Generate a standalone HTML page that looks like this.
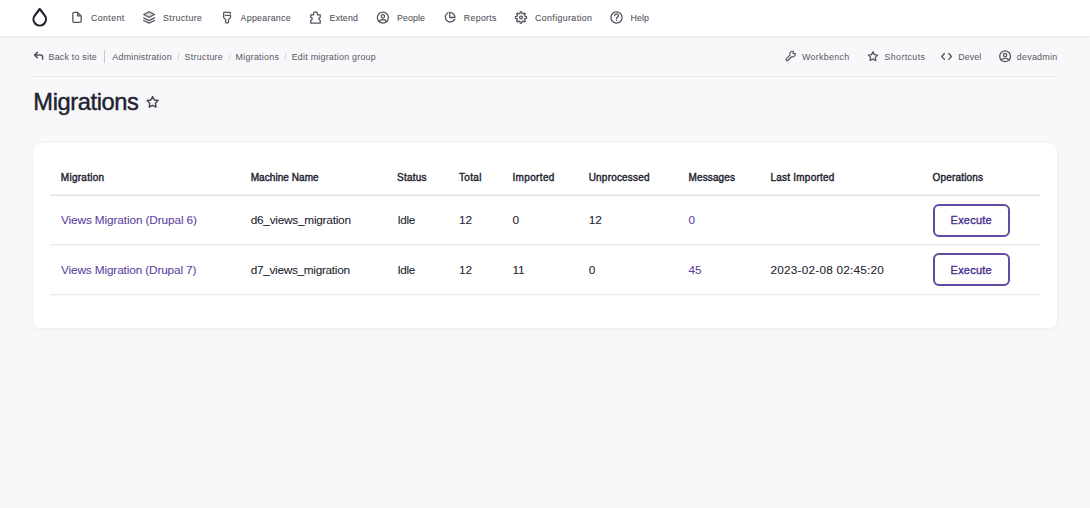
<!DOCTYPE html>
<html><head><meta charset="utf-8"><title>Migrations</title>
<style>
html,body{margin:0;padding:0}
body{width:1090px;height:508px;overflow:hidden;background:#f8f8fb;position:relative;font-family:"Liberation Sans",sans-serif}
.t{position:absolute;white-space:nowrap;line-height:1}
.ic{position:absolute;overflow:visible}
.ov{position:absolute;left:0;top:0}
.toolbar{position:absolute;left:0;top:0;width:1090px;height:36px;background:#fff;box-shadow:0 1px 3px rgba(0,0,0,0.07)}
.hr{position:absolute;left:33px;top:76px;width:1024px;height:1px;background:#e8e8eb}
.card{position:absolute;left:33px;top:143px;width:1024px;height:185px;background:#fff;border-radius:8px;box-shadow:0 1px 4px rgba(0,0,0,0.06)}
.line{position:absolute;left:50px;width:990px;height:1px;background:#ebebec}
.btn{position:absolute;left:932.5px;width:73px;height:29px;border:2px solid #634aa3;border-radius:6px;background:#fff}
</style></head><body>
<div class="toolbar"></div>
<div class="hr"></div>
<div class="card"></div>
<div class="line" style="top:194px;height:1px;background:#efefef"></div><div class="line" style="top:195px;height:1px;background:#e4e4e5"></div>
<div class="line" style="top:244px"></div><div class="line" style="top:245px;background:#f8f8f8"></div>
<div class="line" style="top:294px"></div><div class="line" style="top:295px;background:#f8f8f8"></div>
<div class="btn" style="top:203.5px"></div>
<div class="btn" style="top:253.3px"></div>
<div class="sep" style="position:absolute;left:104px;top:50px;width:1px;height:13px;background:#c8c8cf"></div>
<svg class="ov" width="1090" height="508" viewBox="0 0 1090 508"><path d="M39.75 9.0 L44.64 15.36 A6.25 6.25 0 1 1 34.86 15.36 Z" fill="none" stroke="#222330" stroke-width="2.2" stroke-linejoin="round"/><path d="M77.6 12.35 H74.0 Q72.85 12.35 72.85 13.5 V21.2 Q72.85 22.35 74.0 22.35 H80.0 Q81.15 22.35 81.15 21.2 V15.9 Z M77.6 12.35 V15.9 H81.15" fill="none" stroke="#545560" stroke-width="1.3" stroke-linecap="round" stroke-linejoin="round"/><path d="M143.7 14.5 L149.1 11.75 L154.5 14.5 L149.1 17.25 Z" fill="#d8d8dc" stroke="#545560" stroke-width="1.3" stroke-linejoin="round"/><path d="M143.7 17.85 L149.1 20.6 L154.5 17.85 M143.7 20.5 L149.1 23.1 L154.5 20.5" fill="none" stroke="#545560" stroke-width="1.3" stroke-linecap="round" stroke-linejoin="round"/><path d="M230.45 13.7 V13.0 Q230.45 12.35 229.8 12.35 H224.3 Q223.65 12.35 223.65 13.0 V17.6 L225.6 19.6 V22.2 Q225.6 22.8 226.2 22.8 H227.9 Q228.5 22.8 228.5 22.2 V19.6 L230.45 17.6 V15.3 H225.4" fill="none" stroke="#545560" stroke-width="1.3" stroke-linecap="round" stroke-linejoin="round"/><path d="M313.5 14.9 V13.9 A2.0 2.0 0 0 1 317.5 13.9 V14.9 H320.25 V17.4 A1.45 1.45 0 0 0 320.25 20.3 V23.05 H310.75 V20.3 A1.45 1.45 0 0 0 310.75 17.4 V14.9 Z" fill="none" stroke="#545560" stroke-width="1.3" stroke-linecap="round" stroke-linejoin="round"/><circle cx="382.9" cy="17.6" r="5.55" fill="none" stroke="#545560" stroke-width="1.3" stroke-linecap="round" stroke-linejoin="round"/><circle cx="382.9" cy="16.35" r="1.7" fill="none" stroke="#545560" stroke-width="1.2"/><path d="M379.0 21.7 Q379.9 19.7 382.9 19.7 Q385.9 19.7 386.8 21.7" fill="none" stroke="#545560" stroke-width="1.3" stroke-linecap="round" stroke-linejoin="round"/><path d="M447.9 12.7 A4.95 4.95 0 1 0 454.6 19.4" fill="none" stroke="#545560" stroke-width="1.3" stroke-linecap="round" stroke-linejoin="round"/><path d="M449.7 12.3 V17.5 H454.9 A5.2 5.2 0 0 0 449.7 12.3 Z" fill="none" stroke="#545560" stroke-width="1.3" stroke-linecap="round" stroke-linejoin="round"/><path d="M519.94,13.54 L520.22,11.95 L521.78,11.95 L522.06,13.54 L523.05,13.95 L524.37,13.03 L525.47,14.13 L524.55,15.45 L524.96,16.44 L526.55,16.72 L526.55,18.28 L524.96,18.56 L524.55,19.55 L525.47,20.87 L524.37,21.97 L523.05,21.05 L522.06,21.46 L521.78,23.05 L520.22,23.05 L519.94,21.46 L518.95,21.05 L517.63,21.97 L516.53,20.87 L517.45,19.55 L517.04,18.56 L515.45,18.28 L515.45,16.72 L517.04,16.44 L517.45,15.45 L516.53,14.13 L517.63,13.03 L518.95,13.95 Z" fill="none" stroke="#545560" stroke-width="1.25" stroke-linejoin="round"/><circle cx="521.0" cy="17.5" r="1.45" fill="none" stroke="#545560" stroke-width="1.3" stroke-linecap="round" stroke-linejoin="round"/><circle cx="616.5" cy="17.5" r="5.55" fill="none" stroke="#545560" stroke-width="1.3" stroke-linecap="round" stroke-linejoin="round"/><path d="M614.7 15.7 A1.85 1.85 0 1 1 617.3 17.4 Q616.5 17.8 616.5 18.5" fill="none" stroke="#545560" stroke-width="1.3" stroke-linecap="round" stroke-linejoin="round"/><circle cx="616.5" cy="20.4" r="0.75" fill="#545560"/><path d="M37.4 52.4 L34.6 55.1 L37.4 57.8 M34.8 55.1 H40.6 Q42.6 55.1 42.6 57.1 V59.3" fill="none" stroke="#545560" stroke-width="1.5" stroke-linecap="round" stroke-linejoin="round"/><path d="M786.45 58.55 L789.97 55.06 A2.8 2.8 0 0 1 793.32 51.40 L792.91 52.94 L793.76 53.79 L795.30 53.38 A2.8 2.8 0 0 1 791.64 56.73 L788.15 60.25 A1.2 1.2 0 0 1 786.45 58.55 Z" fill="none" stroke="#545560" stroke-width="1.15" stroke-linejoin="round"/><path d="M872.95,51.74 L874.39,54.62 L877.57,55.10 L875.28,57.36 L875.81,60.53 L872.95,59.05 L870.09,60.53 L870.62,57.36 L868.33,55.10 L871.51,54.62 Z" fill="none" stroke="#545560" stroke-width="1.3" stroke-linecap="round" stroke-linejoin="round"/><path d="M944.4 53.5 L941.75 56.45 L944.4 59.4 M948.8 53.5 L951.45 56.45 L948.8 59.4" fill="none" stroke="#545560" stroke-width="1.35" stroke-linecap="round" stroke-linejoin="round"/><circle cx="1005.1" cy="56.3" r="5.4" fill="none" stroke="#545560" stroke-width="1.3" stroke-linecap="round" stroke-linejoin="round"/><circle cx="1005.1" cy="55.0" r="1.6" fill="none" stroke="#545560" stroke-width="1.3" stroke-linecap="round" stroke-linejoin="round"/><path d="M1001.3 60.2 Q1002.2 58.4 1005.1 58.4 Q1008.0 58.4 1008.9 60.2" fill="none" stroke="#545560" stroke-width="1.3" stroke-linecap="round" stroke-linejoin="round"/><path d="M152.60,96.60 L154.33,99.96 L158.07,100.57 L155.41,103.26 L155.98,107.00 L152.60,105.30 L149.22,107.00 L149.79,103.26 L147.13,100.57 L150.87,99.96 Z" fill="none" stroke="#44454e" stroke-width="1.45" stroke-linejoin="round"/></svg>
<div class="t" style="left:91.10px;top:14.15px;font-size:8.8px;font-weight:400;color:#545560;letter-spacing:0.380px;-webkit-text-stroke:0.1px #545560">Content</div>
<div class="t" style="left:163.10px;top:14.15px;font-size:8.8px;font-weight:400;color:#545560;letter-spacing:0.387px;-webkit-text-stroke:0.1px #545560">Structure</div>
<div class="t" style="left:240.60px;top:14.15px;font-size:8.8px;font-weight:400;color:#545560;letter-spacing:0.282px;-webkit-text-stroke:0.1px #545560">Appearance</div>
<div class="t" style="left:329.60px;top:14.15px;font-size:8.8px;font-weight:400;color:#545560;letter-spacing:0.181px;-webkit-text-stroke:0.1px #545560">Extend</div>
<div class="t" style="left:397.00px;top:14.15px;font-size:8.8px;font-weight:400;color:#545560;letter-spacing:0.099px;-webkit-text-stroke:0.1px #545560">People</div>
<div class="t" style="left:463.80px;top:14.15px;font-size:8.8px;font-weight:400;color:#545560;letter-spacing:0.315px;-webkit-text-stroke:0.1px #545560">Reports</div>
<div class="t" style="left:535.00px;top:14.15px;font-size:8.8px;font-weight:400;color:#545560;letter-spacing:0.388px;-webkit-text-stroke:0.1px #545560">Configuration</div>
<div class="t" style="left:630.50px;top:14.15px;font-size:8.8px;font-weight:400;color:#545560;letter-spacing:0.133px;-webkit-text-stroke:0.1px #545560">Help</div>
<div class="t" style="left:48.50px;top:53.07px;font-size:8.9px;font-weight:400;color:#565761;letter-spacing:0.218px;">Back to site</div>
<div class="t" style="left:112.30px;top:53.07px;font-size:8.9px;font-weight:400;color:#565761;letter-spacing:0.239px;">Administration</div>
<div class="t" style="left:184.50px;top:53.07px;font-size:8.9px;font-weight:400;color:#565761;letter-spacing:0.287px;">Structure</div>
<div class="t" style="left:235.60px;top:53.07px;font-size:8.9px;font-weight:400;color:#565761;letter-spacing:0.260px;">Migrations</div>
<div class="t" style="left:291.70px;top:53.07px;font-size:8.9px;font-weight:400;color:#565761;letter-spacing:0.240px;">Edit migration group</div>
<div class="t" style="left:802.00px;top:53.07px;font-size:8.9px;font-weight:400;color:#565761;letter-spacing:0.293px;">Workbench</div>
<div class="t" style="left:884.50px;top:53.07px;font-size:8.9px;font-weight:400;color:#565761;letter-spacing:0.363px;">Shortcuts</div>
<div class="t" style="left:958.20px;top:53.07px;font-size:8.9px;font-weight:400;color:#565761;letter-spacing:0.111px;">Devel</div>
<div class="t" style="left:1016.80px;top:53.07px;font-size:8.9px;font-weight:400;color:#565761;letter-spacing:0.259px;">devadmin</div>
<div class="t" style="left:177.20px;top:53.07px;font-size:8.9px;font-weight:400;color:#c8c8cf;letter-spacing:0.000px;">/</div>
<div class="t" style="left:228.60px;top:53.07px;font-size:8.9px;font-weight:400;color:#c8c8cf;letter-spacing:0.000px;">/</div>
<div class="t" style="left:284.20px;top:53.07px;font-size:8.9px;font-weight:400;color:#c8c8cf;letter-spacing:0.000px;">/</div>
<div class="t" style="left:33.30px;top:90.74px;font-size:23.7px;font-weight:400;color:#222330;letter-spacing:-0.403px;-webkit-text-stroke:0.45px #222330">Migrations</div>
<div class="t" style="left:60.80px;top:172.94px;font-size:10.0px;font-weight:400;color:#222330;letter-spacing:0.271px;-webkit-text-stroke:0.4px #222330">Migration</div>
<div class="t" style="left:250.70px;top:172.94px;font-size:10.0px;font-weight:400;color:#222330;letter-spacing:0.068px;-webkit-text-stroke:0.4px #222330">Machine Name</div>
<div class="t" style="left:397.00px;top:172.94px;font-size:10.0px;font-weight:400;color:#222330;letter-spacing:0.230px;-webkit-text-stroke:0.4px #222330">Status</div>
<div class="t" style="left:459.00px;top:172.94px;font-size:10.0px;font-weight:400;color:#222330;letter-spacing:0.320px;-webkit-text-stroke:0.4px #222330">Total</div>
<div class="t" style="left:512.40px;top:172.94px;font-size:10.0px;font-weight:400;color:#222330;letter-spacing:0.363px;-webkit-text-stroke:0.4px #222330">Imported</div>
<div class="t" style="left:588.70px;top:172.94px;font-size:10.0px;font-weight:400;color:#222330;letter-spacing:0.198px;-webkit-text-stroke:0.4px #222330">Unprocessed</div>
<div class="t" style="left:688.50px;top:172.94px;font-size:10.0px;font-weight:400;color:#222330;letter-spacing:0.131px;-webkit-text-stroke:0.4px #222330">Messages</div>
<div class="t" style="left:770.50px;top:172.94px;font-size:10.0px;font-weight:400;color:#222330;letter-spacing:0.222px;-webkit-text-stroke:0.4px #222330">Last Imported</div>
<div class="t" style="left:932.60px;top:172.94px;font-size:10.0px;font-weight:400;color:#222330;letter-spacing:0.164px;-webkit-text-stroke:0.4px #222330">Operations</div>
<div class="t" style="left:61.00px;top:214.81px;font-size:11.8px;font-weight:400;color:#5c429f;letter-spacing:-0.113px;-webkit-text-stroke:0.08px #5c429f">Views Migration (Drupal 6)</div>
<div class="t" style="left:250.70px;top:214.81px;font-size:11.8px;font-weight:400;color:#222330;letter-spacing:-0.235px;-webkit-text-stroke:0.08px #222330">d6_views_migration</div>
<div class="t" style="left:397.40px;top:214.81px;font-size:11.8px;font-weight:400;color:#222330;letter-spacing:-0.374px;-webkit-text-stroke:0.08px #222330">Idle</div>
<div class="t" style="left:459.00px;top:214.81px;font-size:11.8px;font-weight:400;color:#222330;letter-spacing:0.000px;-webkit-text-stroke:0.08px #222330">12</div>
<div class="t" style="left:512.40px;top:214.81px;font-size:11.8px;font-weight:400;color:#222330;letter-spacing:0.000px;-webkit-text-stroke:0.08px #222330">0</div>
<div class="t" style="left:588.70px;top:214.81px;font-size:11.8px;font-weight:400;color:#222330;letter-spacing:0.000px;-webkit-text-stroke:0.08px #222330">12</div>
<div class="t" style="left:688.50px;top:214.81px;font-size:11.8px;font-weight:400;color:#5c429f;letter-spacing:0.000px;-webkit-text-stroke:0.08px #5c429f">0</div>
<div class="t" style="left:950.60px;top:215.49px;font-size:11.0px;font-weight:400;color:#4d3191;letter-spacing:0.209px;-webkit-text-stroke:0.4px #4d3191">Execute</div>
<div class="t" style="left:61.00px;top:264.51px;font-size:11.8px;font-weight:400;color:#5c429f;letter-spacing:-0.133px;-webkit-text-stroke:0.08px #5c429f">Views Migration (Drupal 7)</div>
<div class="t" style="left:250.70px;top:264.51px;font-size:11.8px;font-weight:400;color:#222330;letter-spacing:-0.293px;-webkit-text-stroke:0.08px #222330">d7_views_migration</div>
<div class="t" style="left:397.40px;top:264.51px;font-size:11.8px;font-weight:400;color:#222330;letter-spacing:-0.374px;-webkit-text-stroke:0.08px #222330">Idle</div>
<div class="t" style="left:459.00px;top:264.51px;font-size:11.8px;font-weight:400;color:#222330;letter-spacing:0.000px;-webkit-text-stroke:0.08px #222330">12</div>
<div class="t" style="left:512.40px;top:264.51px;font-size:11.8px;font-weight:400;color:#222330;letter-spacing:0.000px;-webkit-text-stroke:0.08px #222330">11</div>
<div class="t" style="left:588.70px;top:264.51px;font-size:11.8px;font-weight:400;color:#222330;letter-spacing:0.000px;-webkit-text-stroke:0.08px #222330">0</div>
<div class="t" style="left:688.50px;top:264.51px;font-size:11.8px;font-weight:400;color:#5c429f;letter-spacing:0.000px;-webkit-text-stroke:0.08px #5c429f">45</div>
<div class="t" style="left:770.50px;top:264.51px;font-size:11.8px;font-weight:400;color:#222330;letter-spacing:0.213px;-webkit-text-stroke:0.08px #222330">2023-02-08 02:45:20</div>
<div class="t" style="left:950.60px;top:265.19px;font-size:11.0px;font-weight:400;color:#4d3191;letter-spacing:0.209px;-webkit-text-stroke:0.4px #4d3191">Execute</div>
</body></html>
